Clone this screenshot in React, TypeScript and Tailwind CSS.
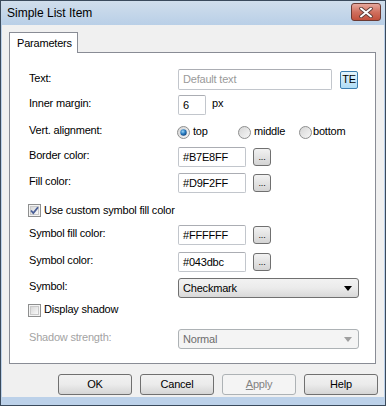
import React from "react";

const font = { fontFamily: '"Liberation Sans", Arial, sans-serif' };

function Radio({ checked }: { checked?: boolean }) {
  return (
    <svg width="13" height="13" viewBox="0 0 13 13" className="shrink-0">
      <defs>
        <linearGradient id="rg" x1="0" y1="0" x2="1" y2="1">
          <stop offset="0" stopColor="#d4d4d4" />
          <stop offset="1" stopColor="#f8f8f8" />
        </linearGradient>
        <radialGradient id="dot" cx="0.4" cy="0.35" r="0.7">
          <stop offset="0" stopColor="#9fd6f6" />
          <stop offset="0.5" stopColor="#2c80c4" />
          <stop offset="1" stopColor="#10407a" />
        </radialGradient>
      </defs>
      <circle cx="6.5" cy="6.5" r="6" fill="url(#rg)" stroke="#8e8f8f" strokeWidth="1" />
      {checked ? <circle cx="6.5" cy="6.5" r="3.2" fill="url(#dot)" /> : null}
    </svg>
  );
}

function Check({ checked }: { checked?: boolean }) {
  return (
    <svg width="13" height="13" viewBox="0 0 13 13" className="shrink-0">
      <defs>
        <linearGradient id="cg" x1="0" y1="0" x2="1" y2="1">
          <stop offset="0" stopColor="#d6d6d6" />
          <stop offset="1" stopColor="#fbfbfb" />
        </linearGradient>
      </defs>
      <rect x="0.5" y="0.5" width="12" height="12" fill="#f4f4f4" stroke="#8e8f8f" />
      <rect x="2.5" y="2.5" width="8" height="8" fill="url(#cg)" stroke="#c9c9c9" />
      {checked ? (
        <path d="M3 6.5 L5.3 9 L10 3.2" fill="none" stroke="#4a5f97" strokeWidth="1.8" />
      ) : null}
    </svg>
  );
}

function Row({ label, children, className, disabled }: { label: string; children: React.ReactNode; className: string; disabled?: boolean }) {
  return (
    <div className={`flex items-center ${className}`}>
      <div className={`w-[149px] pb-[3px] ${disabled ? "text-[#a3a3a3]" : "text-black"}`}>{label}</div>
      {children}
    </div>
  );
}

function TextBox({ value, className }: { value: string; className: string }) {
  return (
    <div className={`h-[20px] flex items-center px-[4px] bg-white border border-[#c2c6cc] border-t-[#abadb3] rounded-[2px] ${className}`}>
      {value}
    </div>
  );
}

function DotsButton() {
  return (
    <div className="w-[18px] h-[18px] ml-[7px] flex items-end justify-center pb-[3px] rounded-[3px] border border-[#707070] bg-gradient-to-b from-[#f2f2f2] to-[#d4d4d4] text-[9px] leading-none">
      ...
    </div>
  );
}

function DlgButton({ children, disabled }: { children: React.ReactNode; disabled?: boolean }) {
  return (
    <div
      className={`w-[74px] h-[21px] flex items-center justify-center rounded-[3px] border ${
        disabled
          ? "border-[#adb2b5] bg-[#f4f4f4] text-[#838383]"
          : "border-[#707070] bg-gradient-to-b from-[#f2f2f2] via-[#ebebeb] to-[#d5d5d5] text-black"
      }`}
    >
      {children}
    </div>
  );
}

export default function App() {
  return (
    <div
      className="w-[386px] h-[406px] flex flex-col border border-[#3a4a5c] bg-[#bcd1e9] text-[11px] tracking-[-0.2px]"
      style={font}
    >
      <div className="h-[24px] shrink-0 flex items-center justify-between pl-[6px] pr-[4px] bg-gradient-to-b from-[#d0deec] to-[#b9cfe7]">
        <span className="text-[12px] tracking-normal text-black">Simple List Item</span>
        <div className="w-[30px] h-[18px] mb-[2px] flex items-center justify-center rounded-[3px] border border-[#6b3a33] bg-gradient-to-b from-[#e6a89d] via-[#d0705f] to-[#c2503c]">
          <svg width="14" height="11" viewBox="0 0 14 11">
            <path d="M2 1.5 L12 9.5 M12 1.5 L2 9.5" stroke="#5b3a36" strokeWidth="3.6" strokeLinecap="round" />
            <path d="M2 1.5 L12 9.5 M12 1.5 L2 9.5" stroke="#ffffff" strokeWidth="2" strokeLinecap="round" />
          </svg>
        </div>
      </div>

      <div className="flex-1 flex flex-col ml-[1px] mr-[1px] mb-[8px] bg-[#f0f0f0]">
        <div className="flex mt-[7px] ml-[7px]">
          <div className="relative z-10 -mb-px w-[69px] h-[21px] flex items-center pl-[7px] bg-white border border-b-0 border-[#898c95] text-black">
            Parameters
          </div>
        </div>
        <div className="ml-[7px] w-[367px] h-[312px] flex flex-col pl-[19px] bg-white border border-[#898c95]">
          <Row label="Text:" className="mt-[16px] h-[21px]">
            <div className="w-[154px] h-[21px] flex items-center px-[4px] bg-white border border-[#c2c6cc] border-t-[#abadb3] rounded-[2px] text-[#9a9a9a]">
              Default text
            </div>
            <div className="ml-[8px] w-[18px] h-[18px] flex items-center justify-center rounded-[2px] border border-[#3c7fb1] bg-gradient-to-b from-[#e5f5fd] to-[#aedcf6] text-black">
              TE
            </div>
          </Row>
          <Row label="Inner margin:" className="mt-[5px] h-[20px]">
            <TextBox value="6" className="w-[28px]" />
            <span className="ml-[6px] pb-[3px]">px</span>
          </Row>
          <Row label="Vert. alignment:" className="mt-[7px] h-[20px]">
            <div className="flex items-center -ml-[1px]">
              <div className="w-[61px] flex items-center gap-[3px]">
                <Radio checked />
                <span className="pb-[1px]">top</span>
              </div>
              <div className="w-[61px] flex items-center gap-[3px]">
                <Radio />
                <span className="pb-[1px]">middle</span>
              </div>
              <div className="flex items-center gap-[1px]">
                <Radio />
                <span className="pb-[1px]">bottom</span>
              </div>
            </div>
          </Row>
          <Row label="Border color:" className="mt-[5px] h-[20px]">
            <TextBox value="#B7E8FF" className="w-[68px]" />
            <DotsButton />
          </Row>
          <Row label="Fill color:" className="mt-[6px] h-[20px]">
            <TextBox value="#D9F2FF" className="w-[68px]" />
            <DotsButton />
          </Row>
          <div className="mt-[8px] h-[19px] flex items-center gap-[3px] -ml-[1px]">
            <Check checked />
            <span className="pb-[1px]">Use custom symbol fill color</span>
          </div>
          <Row label="Symbol fill color:" className="mt-[5px] h-[20px]">
            <TextBox value="#FFFFFF" className="w-[68px]" />
            <DotsButton />
          </Row>
          <Row label="Symbol color:" className="mt-[7px] h-[20px]">
            <TextBox value="#043dbc" className="w-[68px]" />
            <DotsButton />
          </Row>
          <Row label="Symbol:" className="mt-[6px] h-[20px]">
            <div className="w-[181px] h-[20px] flex items-center justify-between pl-[4px] pr-[6px] rounded-[3px] border border-[#707070] bg-gradient-to-b from-[#f2f2f2] via-[#ebebeb] to-[#d8d8d8]">
              <span>Checkmark</span>
              <svg width="8" height="5" viewBox="0 0 8 5">
                <path d="M0 0 H8 L4 5 Z" fill="#000" />
              </svg>
            </div>
          </Row>
          <div className="mt-[3px] h-[18px] flex items-center gap-[3px] -ml-[1px]">
            <Check />
            <span className="pb-[1px]">Display shadow</span>
          </div>
          <Row label="Shadow strength:" className="mt-[10px] h-[20px]" disabled>
            <div className="w-[181px] h-[20px] flex items-center justify-between pl-[4px] pr-[6px] rounded-[3px] border border-[#adb2b5] bg-[#f4f4f4] text-[#6d6d6d]">
              <span>Normal</span>
              <svg width="8" height="5" viewBox="0 0 8 5">
                <path d="M0 0 H8 L4 5 Z" fill="#a0a0a0" />
              </svg>
            </div>
          </Row>
        </div>
        <div className="mt-[10px] mr-[6px] flex justify-end gap-[8px]">
          <DlgButton>OK</DlgButton>
          <DlgButton>Cancel</DlgButton>
          <DlgButton disabled>
            <span>
              <span className="underline">A</span>pply
            </span>
          </DlgButton>
          <DlgButton>Help</DlgButton>
        </div>
      </div>
    </div>
  );
}
